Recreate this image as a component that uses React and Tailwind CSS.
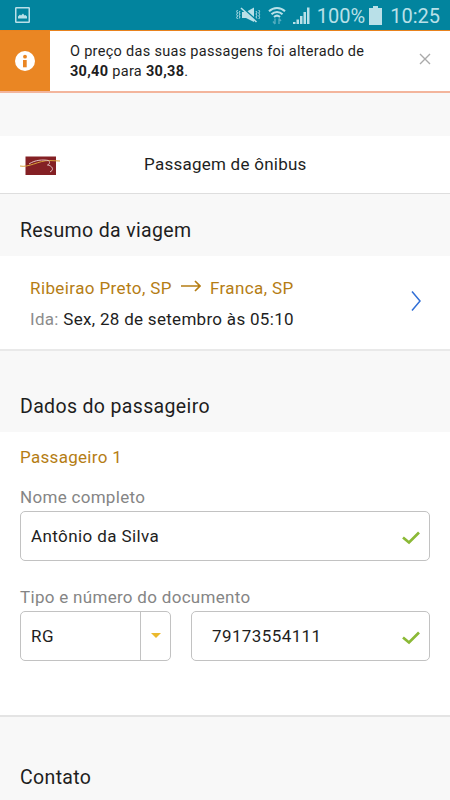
function StatusBar() {
  return (
    <header className="flex h-[30px] items-center bg-[#02849e] pl-[15px] pr-[10px] tracking-normal text-[#b9e0e8]">
      <svg width="15" height="16" viewBox="0 0 15 16" fill="none">
        <rect x="0.75" y="0.75" width="13.5" height="14.5" rx="0.5" stroke="currentColor" strokeWidth="1.5" />
        <path d="M3 11.5V9.5L5 7.5L6 8.5L8 6.5L9.5 8.5L10.5 8L12 9.5V11.5Z" fill="currentColor" />
      </svg>

      <div className="ml-auto flex items-center">
        <svg className="mr-[7px]" width="25" height="18" viewBox="0 0 25 18" fill="none" stroke="currentColor">
          <path d="M6 6H10L18 1.5V16L10 12H6Z" fill="currentColor" stroke="none" />
          <path d="M6.5 2L22 16" stroke="#02849e" strokeWidth="2" />
          <path d="M5 2L20.5 16" strokeWidth="1.6" />
          <path d="M1.5 4L0.7 5.5L1.5 7L0.7 8.5L1.5 10L0.7 11.5L1.5 13M4 5L3.2 6.5L4 8L3.2 9.5L4 11L3.2 12.5" />
          <path d="M20 5L20.8 6.5L20 8L20.8 9.5L20 11L20.8 12.5M22.8 4L23.6 5.5L22.8 7L23.6 8.5L22.8 10L23.6 11.5L22.8 13" />
        </svg>
        <svg className="mr-[7px]" width="18" height="19" viewBox="0 0 18 19" fill="none" stroke="currentColor">
          <path d="M1 5.2C5.5 0.8 12.5 0.8 17 5.2M3.5 8.2C6.5 5.2 11.5 5.2 14.5 8.2M6 11C7.8 9.4 10.2 9.4 12 11" strokeWidth="2" />
          <path d="M7 18V12.5M5 15.5L7 18M11 12.5V18M11 12.5L13 15" strokeWidth="1.4" opacity="0.45" />
        </svg>
        <svg className="mr-[7px]" width="17" height="17" viewBox="0 0 17 17" fill="currentColor">
          <path d="M0 17V15H2.5V17ZM3.5 17V12.5H6V17ZM7 17V9H9.5V17ZM10.5 17V5H13V17ZM14 17V0.5H16.5V17Z" />
        </svg>
        <span className="mr-1 pt-px text-[20px] leading-none">100%</span>
        <svg className="mr-2" width="13" height="19" viewBox="0 0 13 19" fill="currentColor">
          <path d="M4 0H9V2H13V19H0V2H4Z" />
        </svg>
        <span className="pt-px text-[20px] leading-none">10:25</span>
      </div>
    </header>
  );
}

function PriceAlert() {
  return (
    <div className="border-b-2 border-[#f3b59c]">
      <div className="flex h-[61px] border-t border-[#e8821e] bg-white">
        <div className="flex w-[50px] items-center justify-center bg-[#ea8623]">
          <svg width="20" height="20" viewBox="0 0 20 20">
            <circle cx="10" cy="10" r="10" fill="#fff" />
            <circle cx="10" cy="5.7" r="1.9" fill="#ea8623" />
            <path d="M8 9H11.7V16.3H8Z" fill="#ea8623" />
          </svg>
        </div>
        <p className="flex-1 pt-[11px] pl-5 text-[14.5px] leading-5 tracking-[0.3px] whitespace-nowrap">
          O preço das suas passagens foi alterado de
          <br />
          <b>30,40</b> para <b>30,38</b>.
        </p>
        <svg className="mt-[22px] mr-[19px]" width="12" height="12" viewBox="0 0 12 12" stroke="#aaa" strokeWidth="1.4">
          <path d="M1 1L11 11M11 1L1 11" />
        </svg>
      </div>
    </div>
  );
}

function CompanyLogo() {
  return (
    <svg className="mt-[2px]" width="40" height="20" viewBox="0 0 40 20" fill="none">
      <rect x="5.5" y="0.5" width="30.5" height="18.5" fill="#842024" />
      <path d="M0 10C8 12 19 4.5 29 4.5L40 5" stroke="#d9a23b" />
      <path d="M9 8C15 3.8 23 3.5 28.5 4.5C30 6 30 8 27.5 9C31 9.5 33.5 12 32 14.5L30 16" stroke="#e3c0c0" />
    </svg>
  );
}

function SectionTitle({ className, children }) {
  return <h2 className={`flex items-end bg-[#f8f8f8] pl-5 text-[19.5px] leading-6 tracking-[0.35px] ${className}`}>{children}</h2>;
}

function CheckMark() {
  return (
    <svg className="mt-[3px] ml-auto mr-[9px]" width="18" height="14" viewBox="0 0 18 14" fill="none">
      <path d="M1 6.5L7 11.5L17 1.5" stroke="#8bb936" strokeWidth="2.7" />
    </svg>
  );
}

function Field({ className, children }) {
  return (
    <div className={`flex h-[50px] items-center rounded-[5px] border border-[#c2c2c2] tracking-[0.4px] ${className}`}>
      {children}
    </div>
  );
}

export default function App() {
  return (
    <div className="h-[800px] w-[450px] overflow-hidden bg-[#f8f8f8] font-['Roboto',sans-serif] text-[17px] tracking-[0.3px] text-[#1e1e1e]">
      <StatusBar />
      <PriceAlert />

      <div className="mt-[43px] flex h-[58px] items-center border-b border-[#dedede] bg-white pl-5">
        <CompanyLogo />
        <span className="ml-[84px] pt-px tracking-[0.25px]">Passagem de ônibus</span>
      </div>

      <SectionTitle className="h-[62px] pb-[13px]">Resumo da viagem</SectionTitle>
      <section className="flex h-[95px] items-center border-b-2 border-[#e9e9e9] bg-white pl-[30px] pr-[29px]">
        <div className="leading-6">
          <p className="mt-px flex items-center tracking-[0.4px] text-[#b57d14]">
            <span>Ribeirao Preto, SP</span>
            <svg className="mr-[9px] mb-[3px] ml-[9px]" width="20" height="12" viewBox="0 0 20 12" fill="none" stroke="currentColor" strokeWidth="1.7">
              <path d="M0 6H19M14 1L19 6L14 11" />
            </svg>
            <span>Franca, SP</span>
          </p>
          <p className="mt-[7px]">
            <span className="text-[#8c8c8c]">Ida:</span> Sex, 28 de setembro às 05:10
          </p>
        </div>
        <svg className="mb-1 ml-auto" width="10" height="20" viewBox="0 0 10 20" fill="none">
          <path d="M1 0.5L9 10L1 19.5" stroke="#316fd6" strokeWidth="1.5" />
        </svg>
      </section>

      <SectionTitle className="h-[81px] pb-[13px]">Dados do passageiro</SectionTitle>
      <section className="h-[285px] border-b-2 border-[#e4e4e4] bg-white px-5 pt-[13px]">
        <h3 className="leading-6 text-[#b57d14]">Passageiro 1</h3>
        <p className="mt-4 leading-6 text-[#858585]">Nome completo</p>
        <Field className="mt-[2px] pl-[10px]">
          <span className="pt-px">Antônio da Silva</span>
          <CheckMark />
        </Field>
        <p className="mt-6 leading-6 text-[#858585]">Tipo e número do documento</p>
        <div className="mt-[2px] flex gap-5">
          <Field className="w-[151px] pl-[10px]">
            <span className="pt-px">RG</span>
            <div className="ml-auto flex h-full w-[30px] items-center justify-center border-l border-[#c2c2c2]">
              <svg className="mb-px" width="10" height="5" viewBox="0 0 10 5" fill="#ebb92d">
                <path d="M0 0H10L5 5Z" />
              </svg>
            </div>
          </Field>
          <Field className="flex-1 pl-5">
            <span className="pt-px">79173554111</span>
            <CheckMark />
          </Field>
        </div>
      </section>

      <SectionTitle className="h-[74px] pb-px">Contato</SectionTitle>
    </div>
  );
}
